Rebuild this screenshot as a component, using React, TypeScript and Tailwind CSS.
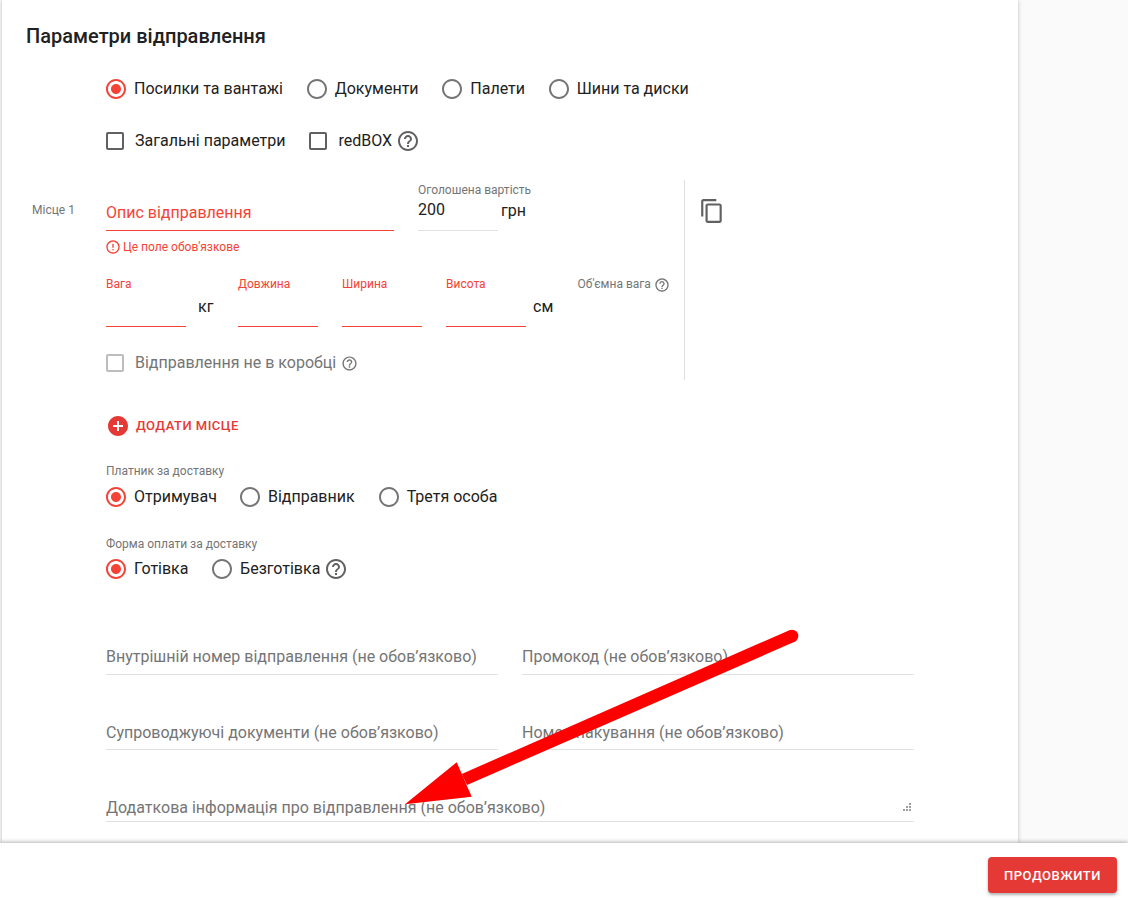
import React from "react";
import {
  MdRadioButtonChecked,
  MdRadioButtonUnchecked,
  MdCheckBoxOutlineBlank,
  MdHelpOutline,
  MdContentCopy,
  MdErrorOutline,
  MdAddCircle,
} from "react-icons/md";

function Radio({ label, checked, mr = "mr-[21.7px]" }: { label: string; checked?: boolean; mr?: string }) {
  return (
    <div className={`flex items-center ${mr}`}>
      {checked ? (
        <MdRadioButtonChecked className="text-[#f44336] shrink-0" size={24} />
      ) : (
        <MdRadioButtonUnchecked className="text-[#757575] shrink-0" size={24} />
      )}
      <span className="ml-[6px] text-[16px] leading-[24px] text-[#212121]">{label}</span>
    </div>
  );
}

function Measure({ label, w = "w-[80px]" }: { label: string; w?: string }) {
  return (
    <div className={`${w} flex flex-col`}>
      <div className="h-[14px] text-[12px] leading-[14px] text-[#f44336]">{label}</div>
      <div className="mt-[35px] h-px bg-[#f44336]" />
    </div>
  );
}

function Field({ label, className = "" }: { label: string; className?: string }) {
  return (
    <div className={`border-b border-[#e0e0e0] text-[16px] leading-[24px] text-[#757575] ${className}`}>{label}</div>
  );
}

export default function App() {
  return (
    <div
      className="relative h-[900px] w-[1128px] overflow-hidden bg-[#fafafa] flex flex-col"
      style={{ fontFamily: "Roboto, 'Noto Sans', sans-serif" }}
    >
      <main className="flex-1 min-h-0 pl-[2px]">
        <div className="w-[1016px] h-full bg-white shadow-[0_0_4px_rgba(0,0,0,0.25)]">
          <h1 className="pl-[24px] pt-[25px] text-[20px] leading-[22px] font-medium text-[#212121]">
            Параметри відправлення
          </h1>

          <div className="pl-[102px]">
            <div className="mt-[30px] flex h-[24px] items-center">
              <Radio label="Посилки та вантажі" checked />
              <Radio label="Документи" />
              <Radio label="Палети" />
              <Radio label="Шини та диски" />
            </div>

            <div className="mt-[28px] -ml-[1px] flex h-[24px] items-center">
              <MdCheckBoxOutlineBlank className="text-[#616161]" size={24} />
              <span className="ml-[8px] text-[16px] text-[#212121]">Загальні параметри</span>
              <MdCheckBoxOutlineBlank className="ml-[21px] text-[#616161]" size={24} />
              <span className="ml-[8px] text-[16px] text-[#212121]">redBOX</span>
              <MdHelpOutline className="ml-[4px] text-[#616161]" size={24} />
            </div>
          </div>

          <div className="mt-[27px] flex h-[200px] w-[746px]">
            <div className="w-[104px] shrink-0 pl-[30px] pt-[23px] text-[12px] leading-[14px] text-[#757575]">Місце 1</div>
            <div className="flex-1 flex flex-col border-r border-[#e0e0e0]">
              <div className="flex h-[86px]">
                <div className="w-[288px]">
                  <div className="mt-[21px] h-[30px] border-b border-[#f44336] text-[16px] leading-[24px] text-[#f44336]">
                    Опис відправлення
                  </div>
                  <div className="mt-[8px] flex items-center text-[12px] leading-[14px] text-[#f44336]">
                    <MdErrorOutline size={16} className="-ml-[1px] mr-[2px]" />
                    Це поле обов'язкове
                  </div>
                </div>
                <div className="ml-[24px] w-[80px]">
                  <div className="mt-[3px] text-[12px] leading-[14px] whitespace-nowrap text-[#757575]">Оголошена вартість</div>
                  <div className="relative mt-[1px] h-[33px] border-b border-[#e0e0e0] text-[16px] leading-[24px] text-[#212121]">
                    200
                    <span className="absolute left-[83px] top-[1px]">грн</span>
                  </div>
                </div>
              </div>

              <div className="mt-[11px] flex">
                <Measure label="Вага" />
                <div className="w-[52px] pl-[12px] pt-[18px] text-[16px] leading-[24px] text-[#212121]">кг</div>
                <Measure label="Довжина" />
                <div className="w-[24px]" />
                <Measure label="Ширина" />
                <div className="w-[24px]" />
                <Measure label="Висота" />
                <div className="w-[51.5px] pl-[7px] pt-[18px] text-[16px] leading-[24px] text-[#212121]">см</div>
                <div className="flex h-[14px] items-center whitespace-nowrap text-[12px] leading-[14px] text-[#757575]">
                  Об'ємна вага
                  <MdHelpOutline size={16} className="ml-[3px] mt-[1px]" />
                </div>
              </div>

              <div className="mt-[24px] -ml-[3px] flex h-[24px] items-center text-[#757575]">
                <MdCheckBoxOutlineBlank className="text-[#bdbdbd]" size={24} />
                <span className="ml-[8px] text-[16px]">Відправлення не в коробці</span>
                <MdHelpOutline className="ml-[5px]" size={17} />
              </div>
            </div>
            <div className="w-[63px] shrink-0 pl-[14px] pt-[18px]">
              <MdContentCopy className="text-[#616161]" size={26} />
            </div>
          </div>

          <div className="pl-[104px]">
            <div className="mt-[34px] flex h-[24px] items-center">
              <MdAddCircle className="text-[#e53935]" size={24} />
              <span className="ml-[6px] text-[13px] font-medium tracking-[0.5px] text-[#e53935]">ДОДАТИ МІСЦЕ</span>
            </div>

            <div className="mt-[26px] text-[12px] leading-[14px] text-[#757575]">Платник за доставку</div>
            <div className="-ml-[2px] mt-[7px] flex h-[24px] items-center">
              <Radio label="Отримувач" checked mr="mr-[21px]" />
              <Radio label="Відправник" mr="mr-[22px]" />
              <Radio label="Третя особа" />
            </div>

            <div className="mt-[28px] text-[12px] leading-[14px] text-[#757575]">Форма оплати за доставку</div>
            <div className="-ml-[2px] mt-[6px] flex h-[24px] items-center">
              <Radio label="Готівка" checked mr="mr-[21.6px]" />
              <Radio label="Безготівка" mr="mr-[4px]" />
              <MdHelpOutline className="text-[#616161]" size={24} />
            </div>

            <div className="mt-[64px] flex gap-[24px] w-[808px]">
              <Field label="Внутрішній номер відправлення (не обов’язково)" className="flex-1 pb-[5px]" />
              <Field label="Промокод (не обов’язково)" className="flex-1 pb-[5px]" />
            </div>
            <div className="mt-[46px] flex gap-[24px] w-[808px]">
              <Field label="Супроводжуючі документи (не обов’язково)" className="flex-1 pb-[4px]" />
              <Field label="Номер пакування (не обов’язково)" className="flex-1 pb-[4px]" />
            </div>
            <div className="relative mt-[46px] w-[808px]">
              <Field label="Додаткова інформація про відправлення (не обов’язково)" className="pb-[1px]" />
              <svg className="absolute right-[2px] top-[7px]" width="9" height="9" viewBox="0 0 9 9" fill="#9e9e9e">
                <rect x="6" y="0" width="2" height="2" />
                <rect x="3" y="3" width="2" height="2" />
                <rect x="6" y="3" width="2" height="2" />
                <rect x="0" y="6" width="2" height="2" />
                <rect x="3" y="6" width="2" height="2" />
                <rect x="6" y="6" width="2" height="2" />
              </svg>
            </div>
          </div>
        </div>
      </main>

      <footer className="relative h-[57px] shrink-0 bg-white shadow-[0_-1px_4px_rgba(0,0,0,0.3)] flex items-start justify-end pt-[14px] pr-[11px]">
        <button className="h-[36px] w-[129px] rounded-[4px] bg-[#e53935] pt-[1px] text-[13px] font-medium tracking-[0.55px] text-white shadow-[0_2px_3px_rgba(0,0,0,0.3)]">
          ПРОДОВЖИТИ
        </button>
      </footer>

      <svg className="absolute left-0 top-0 pointer-events-none" width="1128" height="900" viewBox="0 0 1128 900">
        <circle cx="792" cy="636" r="6.3" fill="#ff0000" />
        <polygon points="789.4,630.2 794.6,641.8 467,785 461.7,774" fill="#ff0000" />
        <polygon points="456.7,762.3 471.7,796.7 405,804.3" fill="#ff0000" />
      </svg>
    </div>
  );
}
